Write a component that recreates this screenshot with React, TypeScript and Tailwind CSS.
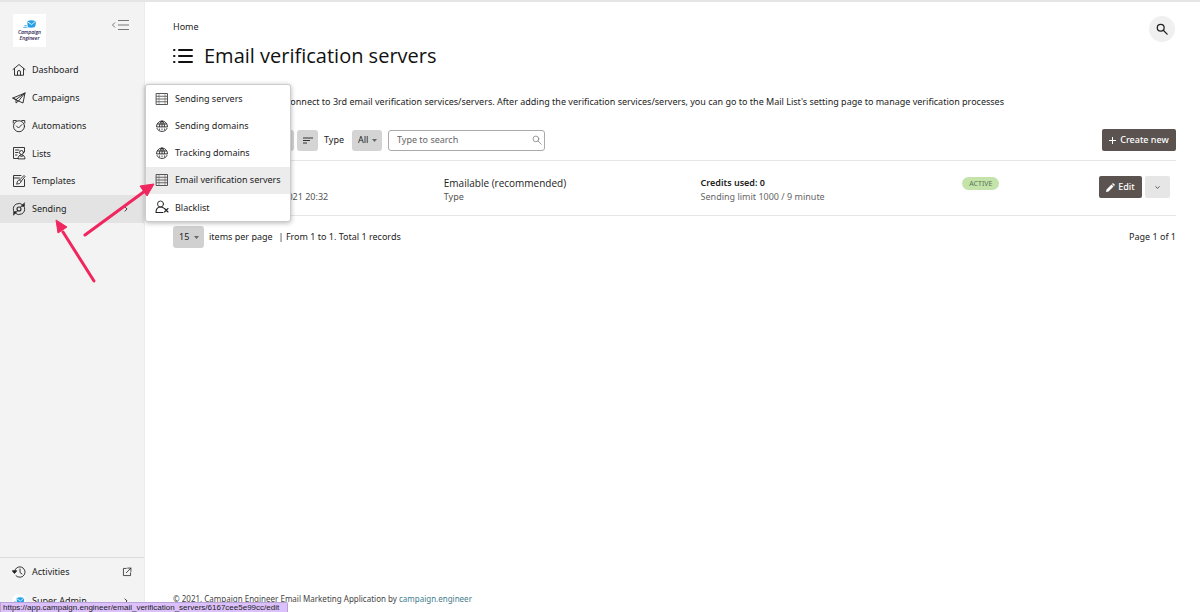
import React from 'react'
import clsx from 'clsx'

type IconProps = { className?: string; children?: React.ReactNode }

function Icon({ className = 'size-[14px]', children }: IconProps) {
  return (
    <svg viewBox="0 0 28 28" fill="none" stroke="currentColor" strokeWidth="1.8" strokeLinecap="round" strokeLinejoin="round" aria-hidden="true" className={clsx('shrink-0', className)}>
      {children}
    </svg>
  )
}

const HomeIcon = () => (
  <Icon>
    <path d="M2 13 14 3l12 10M5 11v13.500h18V11M11 24v-6a3 3 0 0 1 6 0v6" />
  </Icon>
)

const PlaneIcon = () => (
  <Icon>
    <path d="M2 14 26 4l-4 20-9-4zM26 4 8 17v7l5-4M26 4 13 20M8 17l-6-3" />
  </Icon>
)

const AutomationIcon = () => (
  <Icon>
    <circle cx="14" cy="14.500" r="11" />
    <path d="m9 14 4 4 7-7M2.500 8V3h6M19.500 3h6v5" />
  </Icon>
)

const ListsIcon = () => (
  <Icon>
    <path d="M12 25H3V3h22v9M7 8h7M7 13h5M7 18h3" />
    <circle cx="19" cy="13" r="4" />
    <path d="M12 25c0-4 3-7 7-7s7 3 7 7zM16 19l3 3 3-3" />
  </Icon>
)

const TemplateIcon = () => (
  <Icon>
    <path d="M18 3H3v22h22V11M3 8h12" />
    <path d="M10 19c0-5 2-6 5-7l9-9 2 2-8 10c-1 4-4 5-8 5zM15 12l3 3" />
  </Icon>
)

const SendingIcon = () => (
  <Icon>
    <circle cx="14" cy="14" r="4" strokeWidth="2.200" />
    <path d="M3 17A11.400 11.400 0 0 1 22 6M25 11A11.400 11.400 0 0 1 6 22" />
    <path d="M25 2v7h-7zM3 26v-7h7z" fill="currentColor" strokeWidth="1" />
  </Icon>
)

const ServerIcon = () => (
  <Icon>
    <path d="M3 3h22v22H3z" stroke="#444" />
    <path d="M3 8.500h22M3 14h22M3 19.500h22" stroke="#555" strokeWidth="1.800" />
    <path d="M8 3v22M20 3v22" stroke="#666" strokeWidth="1.200" />
  </Icon>
)

const DomainIcon = () => (
  <Icon>
    <path d="M3 15a11 11 0 0 1 22 0zM4 19c3 8 17 8 20 0M14 4v11M9 15c0-5 2-9 5-11 3 2 5 6 5 11M5 10h18" />
    <path d="M9 20h.1M14 20h.1M19 20h.1" strokeWidth="2.500" />
  </Icon>
)

const BlacklistIcon = () => (
  <Icon>
    <circle cx="11" cy="8" r="6" />
    <path d="M16 25H2c0-7 3-11 9-11 3 0 5 1 6 2M19 17l7 7M26 17l-7 7" strokeWidth="2.200" />
  </Icon>
)

const HistoryIcon = () => (
  <Icon>
    <path d="M5 14A10.500 10.500 0 1 1 8 21.500M16 8v7l4 3" />
    <path d="m1 12 4 5 4-5z" fill="currentColor" />
  </Icon>
)

const ExternalIcon = () => (
  <Icon className="size-[10px]">
    <path d="M12 4H4v20h20v-8M16 3h9v9M25 3 12 16" strokeWidth="2.200" />
  </Icon>
)

const SearchIcon = ({ className }: IconProps) => (
  <Icon className={className}>
    <circle cx="11" cy="11" r="8" />
    <path d="m17 17 9 9" />
  </Icon>
)

const Chevron = ({ className }: IconProps) => (
  <Icon className={className}>
    <path d="m9 4 10 10L9 24" strokeWidth="4" />
  </Icon>
)

const Caret = () => (
  <svg viewBox="0 0 10 6" className="pointer-events-none -ml-[10px] h-[3px] w-[5px] shrink-0" fill="#666" aria-hidden="true">
    <path d="M0 0h10L5 6z" />
  </svg>
)

const LogoMark = ({ className }: IconProps) => (
  <svg viewBox="0 0 24 16" className={className} aria-hidden="true">
    <path d="M7 2c5-2 10-2 15 0 1 4 0 8-2 11-5 1-8 1-12 0z" fill="#26a0e8" />
    <path d="m7 3 8 5 7-6" fill="none" stroke="#fff" strokeWidth="1.500" />
    <path d="M0 13h7M2 10h4" stroke="#26a0e8" strokeWidth="1.500" />
  </svg>
)

const navItems = [
  { label: 'Dashboard', icon: HomeIcon },
  { label: 'Campaigns', icon: PlaneIcon },
  { label: 'Automations', icon: AutomationIcon },
  { label: 'Lists', icon: ListsIcon },
  { label: 'Templates', icon: TemplateIcon },
  { label: 'Sending', icon: SendingIcon, active: true },
]

const sendingMenu = [
  { label: 'Sending servers', icon: ServerIcon },
  { label: 'Sending domains', icon: DomainIcon },
  { label: 'Tracking domains', icon: DomainIcon },
  { label: 'Email verification servers', icon: ServerIcon, active: true },
  { label: 'Blacklist', icon: BlacklistIcon },
]

function Sidebar() {
  return (
    <aside className="flex w-[145px] shrink-0 flex-col border-r border-[#ececec] bg-[#f3f3f3]">
      <div className="flex h-[54px] items-start justify-between pt-3 pr-[15px] pl-[13px]">
        <a href="#" className="flex h-[33px] w-[33px] flex-col items-center justify-center bg-white font-['Open_Sans',sans-serif] text-[5px] leading-[6px] font-semibold text-[#2c2350] italic">
          <LogoMark className="h-[9px] w-[14px]" />
          <span>Campaign</span>
          <span>Engineer</span>
        </a>
        <button type="button" aria-label="Collapse menu" className="mt-[5px] text-[#777]">
          <svg viewBox="0 0 34 24" className="h-3 w-[17px]" fill="none" stroke="currentColor" strokeWidth="2" aria-hidden="true">
            <path d="M12 3h22M12 12h22M12 21h22M6 7l-5 5 5 5" />
          </svg>
        </button>
      </div>
      <nav className="grid h-[167px] grid-rows-6">
        {navItems.map(({ label, icon: NavIcon, active }) => (
          <a key={label} href="#" className={clsx('flex items-center gap-[6px] pr-[15px] pl-3', active && 'bg-[#e3e3e3]')}>
            <NavIcon />
            <span className="flex-1">{label}</span>
            {active && <Chevron className="size-[6px]" />}
          </a>
        ))}
      </nav>
      <div className="mt-auto h-[55px] border-t border-[#dcdcdc]">
        <a href="#" className="flex h-[28px] items-center gap-[6px] pr-3 pl-3">
          <HistoryIcon />
          <span className="flex-1">Activities</span>
          <ExternalIcon />
        </a>
        <a href="#" className="flex h-[30px] items-center gap-[6px] pr-[15px] pl-3">
          <span className="flex size-[14px] items-center justify-center rounded-full bg-white">
            <LogoMark className="h-2 w-3" />
          </span>
          <span className="flex-1">Super Admin</span>
          <Chevron className="size-[6px]" />
        </a>
      </div>
    </aside>
  )
}

function SendingMenu() {
  return (
    <div className="absolute top-[82px] left-[145px] grid h-[138px] w-[146px] grid-rows-5 overflow-hidden rounded-[3px] border border-[#ccc] bg-white shadow-[0_1px_5px_rgba(0,0,0,0.3)]">
      {sendingMenu.map(({ label, icon: MenuIcon, active }) => (
        <a key={label} href="#" className={clsx('flex items-center gap-[6px] pl-[9px]', active && 'bg-[#ececec]')}>
          <MenuIcon />
          {label}
        </a>
      ))}
    </div>
  )
}

function Toolbar() {
  return (
    <div className="mt-5 flex h-[22px] items-center">
      <select aria-label="Sort by" className="h-[21px] w-[121px] appearance-none rounded-[3px] bg-[#d4d4d4] px-2">
        <option>Created at</option>
      </select>
      <button type="button" aria-label="Sort direction" className="ml-[3px] flex h-[21px] w-[21px] items-center justify-center rounded-[3px] bg-[#d4d4d4]">
        <svg viewBox="0 0 20 14" className="h-[7px] w-[10px]" stroke="#333" strokeWidth="2.400" aria-hidden="true">
          <path d="M0 2h20M0 7h14M0 12h8" />
        </svg>
      </button>
      <label htmlFor="type" className="ml-[6px] w-[28px]">Type</label>
      <div className="flex items-center">
        <select id="type" className="h-[21px] w-[30px] appearance-none rounded-[3px] bg-[#d4d4d4] pl-[6px]">
          <option>All</option>
        </select>
        <Caret />
      </div>
      <div className="ml-[11px] flex h-[21px] w-[157px] items-center rounded-[3px] border border-[#aaa] pr-[2px] pl-2">
        <input type="text" aria-label="Search" placeholder="Type to search" className="min-w-0 flex-1 outline-none placeholder:text-[#666]" />
        <SearchIcon className="size-[10px] text-[#666]" />
      </div>
      <button type="button" className="ml-auto flex h-[22px] w-[74px] items-center justify-center gap-1 rounded-[2px] bg-[#5b534f] font-medium text-white">
        <svg viewBox="0 0 14 14" className="size-[7px]" stroke="currentColor" strokeWidth="2" aria-hidden="true">
          <path d="M7 0v14M0 7h14" />
        </svg>
        Create new
      </button>
    </div>
  )
}

function ServerTable() {
  return (
    <table className="mt-[9px] w-full table-fixed border-y border-[#e6e6e6] text-left">
      <tbody>
        <tr className="h-[55px] align-top leading-[14px]">
          <td className="w-[27%] pt-[29px] pl-[82px] text-[#555]">10/14/2021 20:32</td>
          <td className="w-[25.600%] pt-[15px]">
            <div className="font-['Open_Sans',sans-serif] text-[10px] font-medium">Emailable (recommended)</div>
            <div className="text-[#555]">Type</div>
          </td>
          <td className="w-[26.100%] pt-[15px]">
            <div className="font-semibold">Credits used: 0</div>
            <div className="text-[#666]">Sending limit 1000 / 9 minute</div>
          </td>
          <td className="pt-4">
            <span className="flex h-[13px] w-[37px] items-center justify-center rounded-full bg-[#c3e3ab] text-[7px] text-[#5c7550]">ACTIVE</span>
          </td>
          <td className="pt-[15px] pr-[6px]">
            <div className="flex justify-end gap-[3px]">
              <button type="button" className="flex h-[22px] w-[43px] items-center justify-center gap-[3px] rounded-[2px] bg-[#5b534f] font-medium text-white">
                <svg viewBox="0 0 18 18" className="size-[9px]" fill="currentColor" aria-hidden="true">
                  <path d="M1 13 11 3l4 4L5 17l-5 1zM12 2l2-2 4 4-2 2z" />
                </svg>
                Edit
              </button>
              <button type="button" aria-label="More actions" className="flex h-[22px] w-[25px] items-center justify-center rounded-[2px] bg-[#e6e6e6]">
                <Chevron className="size-[5px] rotate-90" />
              </button>
            </div>
          </td>
        </tr>
      </tbody>
    </table>
  )
}

function Annotations() {
  return (
    <svg viewBox="0 0 120 120" className="pointer-events-none absolute top-[168px] left-[40px] size-[120px]" fill="#f0265f" stroke="#f0265f" aria-hidden="true">
      <path d="M45 65 105 21M54 111 23 62" strokeWidth="3" strokeLinecap="round" />
      <path d="M114 14 100 16l7 10zM16 50l2 13 9-6z" strokeWidth="1" strokeLinejoin="round" />
    </svg>
  )
}

export default function App() {
  return (
    <div className="relative flex h-screen overflow-hidden border-t-2 border-[#e5e5e5] bg-white font-['Noto_Sans','Open_Sans',sans-serif] text-[9px] text-[#222]">
      <Sidebar />
      <main className="flex min-w-0 flex-1 flex-col pr-6 pl-7">
        <div className="flex items-start justify-between">
          <div>
            <a href="#" className="mt-[18px] block h-[14px] leading-[14px]">Home</a>
            <h1 className="mt-2 flex h-7 items-center gap-[11px] font-['Open_Sans',sans-serif] text-[20px] text-[#111]">
              <svg viewBox="0 0 40 32" className="h-4 w-5" fill="none" stroke="currentColor" strokeWidth="4" strokeLinecap="round" aria-hidden="true">
                <path d="M12 4h26M12 16h26M12 28h26M2 4h1M2 16h1M2 28h1" />
              </svg>
              Email verification servers
            </h1>
          </div>
          <button type="button" aria-label="Search" className="mt-[14px] mr-[1px] flex size-[26px] items-center justify-center rounded-full bg-[#f0f0f0]">
            <SearchIcon className="size-3 stroke-[3]" />
          </button>
        </div>
        <p className="mt-[25px] h-[14px] pl-[113px] leading-[14px] whitespace-nowrap">
          connect to 3rd email verification services/servers. After adding the verification services/servers, you can go to the Mail List's setting page to manage verification processes
        </p>
        <Toolbar />
        <ServerTable />
        <div className="mt-[10px] flex h-[22px] items-center">
          <select aria-label="Items per page" className="h-[22px] w-[31px] appearance-none rounded-[3px] bg-[#d0d0d0] pl-[6px]">
            <option>15</option>
          </select>
          <Caret />
          <span className="ml-[10px]">items per page</span>
          <span className="ml-[6px]">| From 1 to 1. Total 1 records</span>
          <span className="ml-auto">Page 1 of 1</span>
        </div>
        <footer className="mt-auto pb-[6px] text-[8px] leading-[14px] text-[#444]">
          © 2021. Campaign Engineer Email Marketing Application by <a href="#" className="text-[#3f7d8c]">campaign.engineer</a>
        </footer>
      </main>
      <SendingMenu />
      <Annotations />
      <div className="absolute bottom-0 left-0 h-[10px] w-[288px] rounded-tr-[2px] border border-b-0 border-[#b9a3d6] bg-[#dcc0fb] pl-[2px] font-['Liberation_Sans',sans-serif] text-[8px] leading-[10px] whitespace-nowrap">
        https://app.campaign.engineer/email_verification_servers/6167cee5e99cc/edit
      </div>
    </div>
  )
}
